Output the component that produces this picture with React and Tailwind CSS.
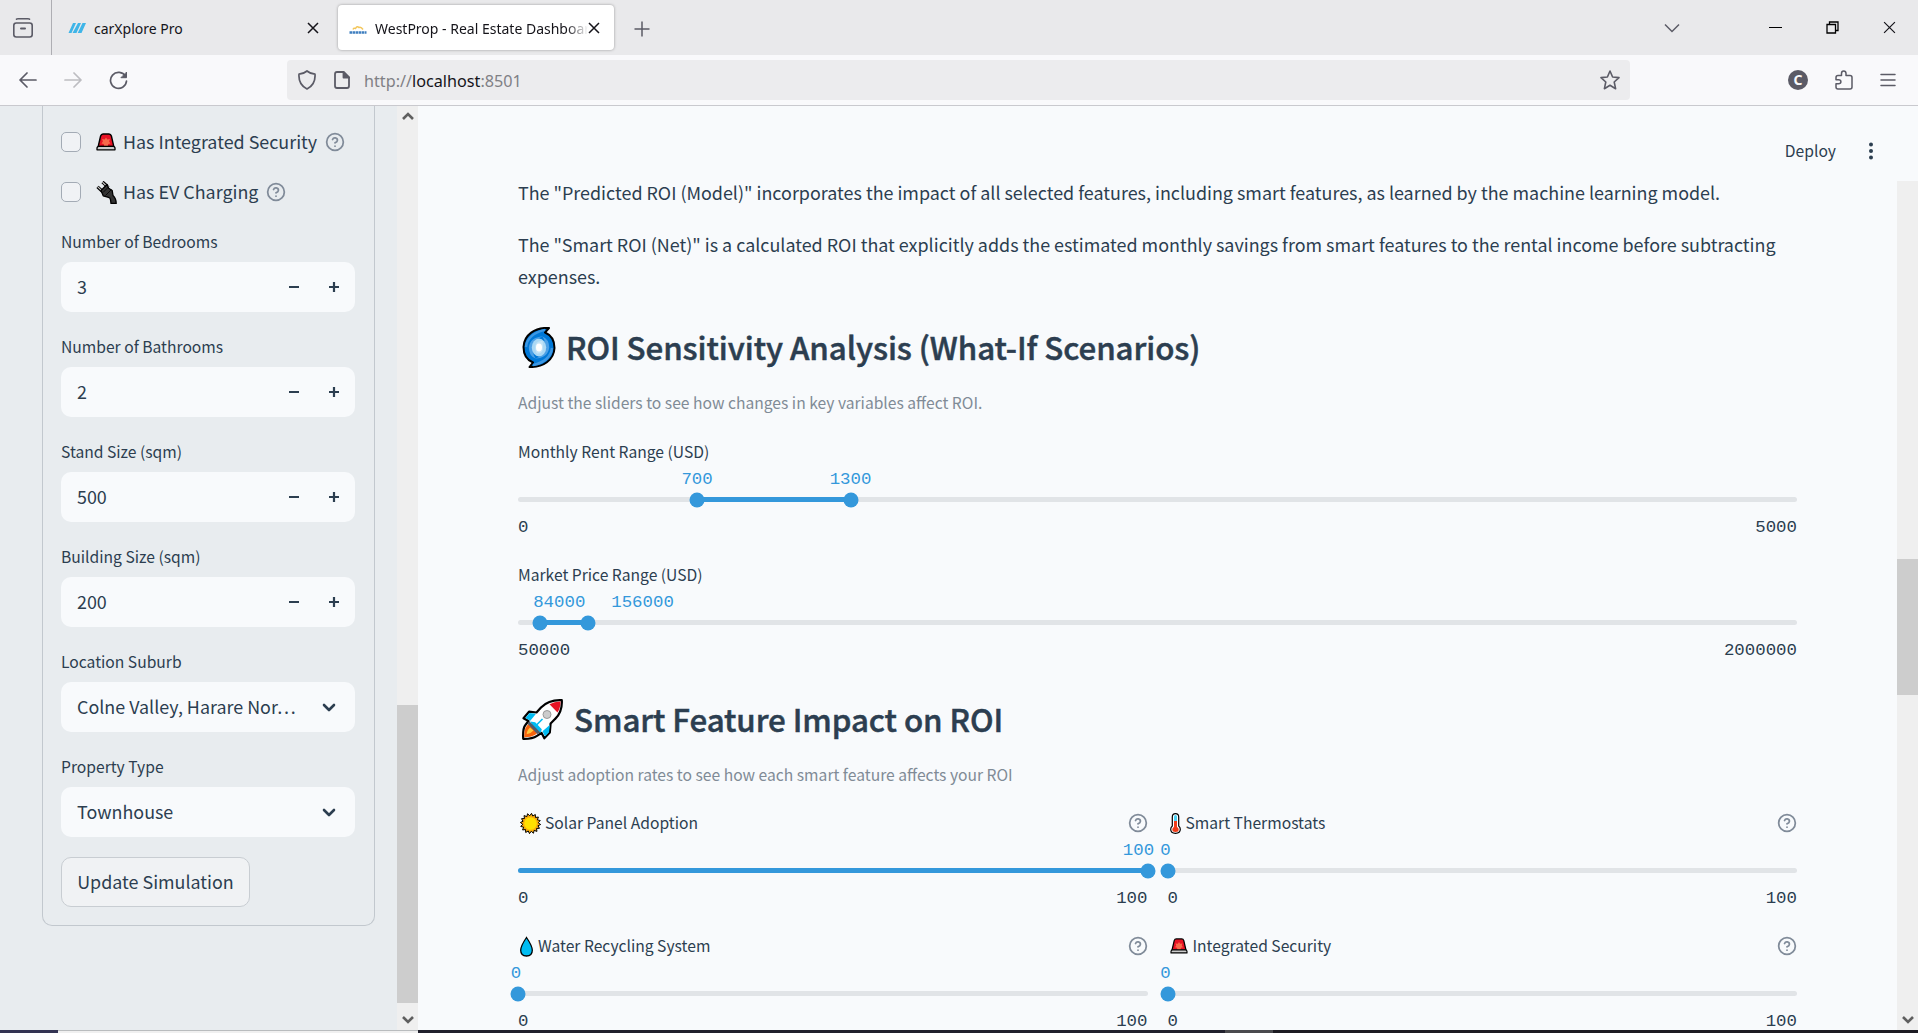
import React from 'react';

/* ---------- emoji artwork ---------- */

const Siren = ({ className }) => (
  <svg viewBox="0 0 20 18" className={className} fill="none">
    <path d="M2.2 13.5 4.6 3Q5.2 1 7 1h6q1.8 0 2.4 2l2.4 10.5Z" fill="#e81224" stroke="#000" strokeWidth="1.4" />
    <path d="m10 4.6 1.3 2 2.6-.5-.8 2.4 1.4 2-2.2.6-.6 2.2H8.300l-.6-2.200-2.200-.6 1.400-2-.8-2.400 2.600.5Z" fill="#f7694a" />
    <path d="M1 16.800v-1.600q0-1.900 2-1.900h14q2 0 2 1.900v1.600Z" fill="#ccc" stroke="#000" strokeWidth="1.300" strokeLinejoin="round" />
  </svg>
);

const Plug = ({ className }) => (
  <svg viewBox="0 0 21 23" className={className} fill="none">
    <path d="m6.500 1 5 4.500M1.500 5.800l5 4.700" stroke="#000" strokeWidth="3.200" />
    <path d="m6.500 1.200 4.500 4.300M1.800 5.800l4.700 4.500" stroke="#ccc" strokeWidth="1.100" />
    <path d="M11 3.500 5 9.500l2.200 5.300 4.600 1.400 2 .8q1.200 2 1.200 5.500h5.200q0-5-3.200-8l-.8-5-3.500-2.200Z" fill="#333" stroke="#000" strokeWidth="1.300" strokeLinejoin="round" />
    <path d="m7 11.500 6-6M9.500 14.500l6-6" stroke="#000" strokeWidth=".8" />
  </svg>
);

const Cyclone = ({ className }) => (
  <svg viewBox="0 0 34 41" className={className} fill="none">
    <path d="M27 1C13 0 2 8 1.500 20 1.500 27 5 33 11 35.500L7.500 40C21 40.500 32 33 32.500 21 32.500 14 29 8 23 5.500Z" fill="#0078d7" stroke="#000" strokeWidth="2" strokeLinejoin="round" />
    <path d="M23 2.900Q5.500 7 4 20M11 38.100Q28.500 34 30 21" stroke="#3d97e3" strokeWidth="2.400" />
    <path d="M21 9.500Q8 10 6.800 20.500 7 29 13.500 31.500 9.500 25 11 18q2-6.500 10-8.500ZM13 31.500Q26 31 27.200 20.500 27 12 20.500 9.500 24.500 16 23 23q-2 6.500-10 8.500Z" fill="#4ca0e6" />
    <ellipse cx="17" cy="20.500" rx="7.200" ry="9" fill="#abd8f4" />
    <path d="M20.500 14q-7-1-7.300 6.500.3 5.500 2.300 6.300 5.800-.5 5.600-6.300 0-3-.6-6.500Z" fill="#fff" opacity=".3" />
    <ellipse cx="17" cy="20.500" rx="3" ry="4" fill="#fff" />
  </svg>
);

const Rocket = ({ className }) => (
  <svg viewBox="0 0 41 41" className={className} fill="none">
    <path d="M39.800 1.200Q27 .5 19 8.500l-4.500 5-7.500-.8-5.500 6.500 5 2.800-3.300 4.200q-2.500 3-2 13.600 9 .2 13.800-3l4.500-3 2.800 5.500 5.500-5.700.8-9 4.400-4.500Q40.500 13 39.800 1.200Z" fill="#fff" stroke="#000" strokeWidth="2.200" strokeLinejoin="round" />
    <path d="m14 14.800-6.500-.8-4 4.900 4.800 2.800Zm14 11-1 7.500-4 4.100-2.500-5.100ZM8.200 22.500l5 .8 6.600 7-1 3.200-6-2.500Z" fill="#00bcf2" />
    <path d="M27.500 5.200q5-2.800 11-2.700 0 6.500-3 11Z" fill="#e81224" />
    <path d="M6.200 25 3.400 29q-1.300 3.500-1.200 9.300 7 0 11-2.500l2.500-2Z" fill="#f7630c" />
    <path d="M8 28.500q-3.500 3.500-3.300 6.800 4-.5 6.800-3.800Z" fill="#ffc83d" />
    <path d="m7.300 22.300 11.300 11.500-3.300 1.200L5.800 25Z" fill="#515c6b" />
    <path d="m14.500 26 6-6" stroke="#00bcf2" strokeWidth="1.600" />
    <circle cx="25" cy="15.500" r="4" fill="#ccc" stroke="#999" strokeWidth="1" />
  </svg>
);

const sunPoints = Array.from({ length: 32 }, (_, i) => {
  const r = i % 2 ? 7.8 : 10.2;
  const a = (i / 32) * Math.PI * 2 + 0.1;
  return `${(10.5 + r * Math.cos(a)).toFixed(2)},${(10.5 + r * Math.sin(a)).toFixed(2)}`;
}).join(' ');

const Sun = ({ className }) => (
  <svg viewBox="0 0 21 21" className={className}>
    <polygon points={sunPoints} fill="#f7a80c" stroke="#000" strokeWidth="1" />
    <circle cx="10.500" cy="10.500" r="6.300" fill="#ffe000" />
  </svg>
);

const Thermometer = ({ className }) => (
  <svg viewBox="0 0 11 21" className={className}>
    <path d="M2.300 4q0-3.300 3.200-3.300T8.700 4v9q1.600 1.300 1.600 3.300 0 4-4.800 4t-4.800-4q0-2 1.600-3.300Z" fill="#fff" stroke="#000" strokeWidth="1.200" />
    <path d="M4 3.500q0-1.500 1.500-1.500T7 3.500V8H4Z" fill="#4dd2f5" />
    <path d="M4 8h3v6q1.700.8 1.700 2.500 0 2.500-3.200 2.500t-3.200-2.500Q2.300 14.800 4 14Z" fill="#f03a17" />
  </svg>
);

const Drop = ({ className }) => (
  <svg viewBox="0 0 13 21" className={className}>
    <path d="M6.500 1.500Q.7 10 .7 14.300q0 5.700 5.800 5.700t5.800-5.700Q12.300 10 6.500 1.500Z" fill="#00bcf2" stroke="#000" strokeWidth="1.300" />
  </svg>
);

/* ---------- small icons ---------- */

const Help = ({ className = '' }) => (
  <svg viewBox="0 0 24 24" className={`size-5 shrink-0 ${className}`} fill="none" stroke="#808b99" strokeWidth="2.100" strokeLinecap="round" strokeLinejoin="round">
    <circle cx="12" cy="12" r="10" />
    <path d="M9.090 9a3 3 0 0 1 5.830 1c0 2-3 3-3 3M12 17h.01" />
  </svg>
);

const Cross = ({ className, w = 1.5 }) => (
  <svg viewBox="0 0 12 12" className={className} fill="none" stroke="#15141a" strokeWidth={w}>
    <path d="m1 1 10 10M11 1 1 11" />
  </svg>
);

const ScrollArrow = ({ up }) => (
  <svg viewBox="0 0 12 8" className="h-2 w-3" fill="none" stroke="#5f5f5f" strokeWidth="2.600">
    <path d={up ? 'm1 7 5-5 5 5' : 'm1 1 5 5 5-5'} />
  </svg>
);

/* ---------- browser chrome ---------- */

function TabBar() {
  return (
    <div className="flex h-[55px] shrink-0 bg-[#e9e9eb] text-sm text-[#15141a]">
      <div className="flex w-[52px] shrink-0 items-center border-r border-[#aeaeb3] pl-[13px]">
        <svg viewBox="0 0 20 20" className="size-5" fill="none" stroke="#5b5b66" strokeWidth="1.600" strokeLinecap="round">
          <path d="M3.500 1.200Q4 .8 5 .8h10q1 0 1.500.4" />
          <rect x=".8" y="5" width="18.400" height="14" rx="2.500" />
          <path d="M8 10.500h4" strokeWidth="2" />
        </svg>
      </div>
      <div className="flex w-[286px] items-center pr-[19px] pl-4">
        <svg viewBox="0 0 18 12" className="mt-px h-3 w-[18px]" fill="#3fb5e8">
          <path d="M5 1h3L3.500 11h-3ZM10 1h3L8.500 11h-4ZM14.500 1H18l-4.500 10H9.700Z" />
        </svg>
        <span className="ml-2 flex-1 pt-0.5">carXplore Pro</span>
        <Cross className="size-3" />
      </div>
      <div className="mt-[5px] flex h-[45px] w-[276px] items-center rounded bg-white pl-[11px] shadow-[0_0_3px_rgba(0,0,0,0.35)]">
        <svg viewBox="0 0 18 10" className="mt-1 h-[10px] w-[18px] shrink-0" fill="none">
          <path d="M4 4.500q1-2 2.500-1Q8 .6 10 2.500q2-1 4 2" stroke="#f3c65a" strokeWidth="1.500" />
          <path d="M.5 7.500h17" stroke="#3f7fc0" strokeWidth="2.400" strokeDasharray="2.500 .5" />
        </svg>
        <span className="ml-2 w-[213px] shrink-0 overflow-hidden pt-0.5 whitespace-nowrap [mask-image:linear-gradient(to_right,black_90%,transparent)]">
          WestProp - Real Estate Dashboard
        </span>
        <Cross className="size-3 shrink-0" />
      </div>
      <svg viewBox="0 0 16 16" className="mt-[21px] ml-5 size-4" stroke="#5b5b66" strokeWidth="1.500">
        <path d="M8 .5v15M.5 8h15" />
      </svg>
      <div className="flex flex-1 items-center justify-end pr-[22px]">
        <svg viewBox="0 0 16 10" className="mr-[89px] h-[10px] w-4" fill="none" stroke="#5b5b66" strokeWidth="1.500">
          <path d="m1 1.500 7 7 7-7" />
        </svg>
        <div className="mr-[44px] h-px w-[13px] bg-black" />
        <svg viewBox="0 0 13 13" className="mr-11 size-[13px]" fill="none" stroke="#000" strokeWidth="1.300">
          <path d="M1 3.500h8.500V12H1ZM3.500 3.500V1H12v8.500H9.500" />
        </svg>
        <Cross className="size-[13px]" w={1.1} />
      </div>
    </div>
  );
}

function NavBar() {
  return (
    <div className="flex h-[51px] shrink-0 items-center border-b border-[#c9c9ce] bg-[#f9f9fb]">
      <svg viewBox="0 0 18 16" className="ml-[19px] h-4 w-[18px]" fill="none" stroke="#5b5b66" strokeWidth="1.700" strokeLinecap="round" strokeLinejoin="round">
        <path d="M17 8H1.500M8 1 1 8l7 7" />
      </svg>
      <svg viewBox="0 0 18 16" className="ml-[27px] h-4 w-[18px]" fill="none" stroke="#bdbdc1" strokeWidth="1.700" strokeLinecap="round" strokeLinejoin="round">
        <path d="M1 8h15.500M10 1l7 7-7 7" />
      </svg>
      <svg viewBox="0 0 19 19" className="ml-[27px] size-[19px]" fill="none" stroke="#5b5b66" strokeWidth="1.700" strokeLinecap="round">
        <path d="M16.500 5.500A8 8 0 1 0 17.500 10" />
        <path d="M17.500 1.500v5.200h-5.200Z" fill="#5b5b66" strokeWidth="1" strokeLinejoin="round" />
      </svg>
      <div className="ml-[159px] flex h-10 w-[1343px] items-center rounded bg-[#ececee]">
        <svg viewBox="0 0 20 20" className="ml-[10px] size-5" fill="none" stroke="#5b5b66" strokeWidth="1.700" strokeLinejoin="round">
          <path d="M10 1Q13.500 4 18 4.200 18.800 14.500 10 19 1.200 14.500 2 4.200 6.500 4 10 1Z" />
        </svg>
        <svg viewBox="0 0 16 18" className="ml-[17px] h-[18px] w-4" fill="none" stroke="#5b5b66" strokeWidth="1.800" strokeLinejoin="round">
          <path d="M3 1h6.500L15 6.500V15q0 2-2 2H3q-2 0-2-2V3q0-2 2-2Z" />
          <path d="M9.500 1v5.500H15Z" fill="#5b5b66" />
        </svg>
        <span className="ml-[14px] flex-1 pt-[3px] text-[16.2px] text-[#808085]">
          http://<span className="text-[#15141a]">localhost</span>:8501
        </span>
        <svg viewBox="0 0 20 20" className="mr-[10px] size-5" fill="none" stroke="#5b5b66" strokeWidth="1.600" strokeLinejoin="round">
          <path d="m10 1 2.600 6 6.400.6-4.800 4.400L15.600 18.700 10 15.300l-5.600 3.400L5.800 12 1 7.600 7.400 7Z" />
        </svg>
      </div>
      <div className="ml-[158px] flex size-5 items-center justify-center rounded-full bg-[#5b5b66] text-sm leading-none font-bold text-[#f9f9fb]">C</div>
      <svg viewBox="0 0 18 20" className="ml-[27px] h-5 w-[18px]" fill="none" stroke="#5b5b66" strokeWidth="1.500" strokeLinejoin="round">
        <path d="M6.500 5.500V3.400q0-2.400 2.200-2.400T11 3.400v2.100h4q2 0 2 2V17q0 2-2 2H3q-2 0-2-2v-3.300h2.500q2.400 0 2.400-2t-2.400-2H1V7.500q0-2 2-2Z" />
      </svg>
      <svg viewBox="0 0 16 14" className="ml-[27px] h-[14px] w-4" stroke="#5b5b66" strokeWidth="1.500" strokeLinecap="round">
        <path d="M1 1.500h14M1 7h14M1 12.500h14" />
      </svg>
    </div>
  );
}

/* ---------- sidebar ---------- */

const labelText = 'text-[15.65px]';

function CheckRow({ icon, children }) {
  return (
    <div className="flex h-5 items-center">
      <div className="size-5 rounded-[5px] border border-[#a3abb5] bg-[#f0f2f5]" />
      <div className="ml-[15px] flex w-[27px]">{icon}</div>
      <span className="pb-0.5 text-[17.9px] leading-5 whitespace-nowrap">{children}</span>
      <Help className="ml-2" />
    </div>
  );
}

function Field({ label, children }) {
  return (
    <div>
      <div className={`mb-[5px] h-[30px] leading-[30px] ${labelText}`}>{label}</div>
      <div className="flex h-[50px] items-center rounded-[10px] bg-[#f8fafc] pl-4 text-[17.9px]">{children}</div>
    </div>
  );
}

function NumberField({ label, value }) {
  return (
    <Field label={label}>
      <span className="flex-1 pb-0.5">{value}</span>
      <svg viewBox="0 0 10 10" className="mr-[30px] size-[10px]" fill="#2c3e50">
        <path d="M0 4h10v2H0Z" />
      </svg>
      <svg viewBox="0 0 10 10" className="mr-4 size-[10px]" fill="#2c3e50">
        <path d="M0 3.900h3.900V0h2.200v3.900H10v2.200H6.100V10H3.900V6.100H0Z" />
      </svg>
    </Field>
  );
}

function SelectField({ label, value }) {
  return (
    <Field label={label}>
      <span className="flex-1 pb-0.5">{value}</span>
      <svg viewBox="0 0 14 9" className="mr-[19px] h-[9px] w-[14px]" fill="none" stroke="#2c3e50" strokeWidth="2.600" strokeLinecap="round" strokeLinejoin="round">
        <path d="m2 2 5 5 5-5" />
      </svg>
    </Field>
  );
}

function Sidebar() {
  return (
    <aside className="flex w-[418px] shrink-0 bg-[#e8ecef]">
      <div className="w-[397px] pl-[42px]">
        <div className="flex h-[820px] w-[333px] flex-col rounded-b-[10px] border border-t-0 border-[#c2c8ce] pt-[26px] pr-[19px] pl-[18px]">
          <div className="flex flex-col gap-[30px]">
            <CheckRow icon={<Siren className="h-[18px] w-5" />}>Has Integrated Security</CheckRow>
            <CheckRow icon={<Plug className="h-[23px] w-[21px]" />}>Has EV Charging</CheckRow>
          </div>
          <div className="mt-[25px] flex flex-col gap-5">
            <NumberField label="Number of Bedrooms" value="3" />
            <NumberField label="Number of Bathrooms" value="2" />
            <NumberField label="Stand Size (sqm)" value="500" />
            <NumberField label="Building Size (sqm)" value="200" />
            <SelectField label="Location Suburb" value="Colne Valley, Harare Nor…" />
            <SelectField label="Property Type" value="Townhouse" />
            <button className="h-[50px] w-[189px] rounded-[10px] border border-[#c8cdd2] bg-[#f0f2f4] pb-0.5 text-[17.9px] whitespace-nowrap">
              Update Simulation
            </button>
          </div>
        </div>
      </div>
      <div className="flex w-[21px] flex-col items-center bg-[#efefef]">
        <div className="flex h-[19px] items-center"><ScrollArrow up /></div>
        <div className="mt-auto h-[298px] w-full bg-[#cdcdcd]" />
        <div className="flex h-[27px] items-center pt-[6px]"><ScrollArrow /></div>
      </div>
    </aside>
  );
}

/* ---------- main area ---------- */

const mono = "font-['Liberation_Mono',monospace] text-[17.4px]";

function Slider({ icon, label, min, max, stops, help }) {
  const from = stops.length > 1 ? stops[0].at : 0;
  const to = stops[stops.length - 1].at;
  return (
    <div className="relative flex h-[103px] min-w-0 flex-1 flex-col">
      <div className="flex h-7 items-center">
        {icon}
        <span className={`flex-1 whitespace-nowrap ${labelText}`}>{label}</span>
        {help && <Help />}
      </div>
      <div className="relative mt-[31px] h-[5px] rounded-full bg-[#e1e4e7]">
        <div className="absolute h-full rounded-full bg-[#3498db]" style={{ left: `${from}%`, width: `${to - from}%` }} />
        {stops.map((s) => (
          <React.Fragment key={s.text}>
            <div className="absolute top-1/2 size-[15px] -translate-1/2 rounded-full bg-[#3498db]" style={{ left: `${s.at}%` }} />
            <div
              className={`absolute -top-7 -translate-x-1/2 leading-[21px] text-[#3498db] ${mono}`}
              style={{ left: `calc(${s.at}% + ${s.shift || 0}px)` }}
            >
              {s.text}
            </div>
          </React.Fragment>
        ))}
      </div>
      <div className={`mt-4 flex justify-between leading-5 ${mono}`}>
        <span>{min}</span>
        <span>{max}</span>
      </div>
    </div>
  );
}

function Heading({ icon, children }) {
  return (
    <h2 className="mt-[30px] flex h-[50px] shrink-0 items-center text-[31.3px] font-medium tracking-[-0.07px] whitespace-nowrap [-webkit-text-stroke:0.5px_#2c3e50]">
      {icon}
      <span>{children}</span>
    </h2>
  );
}

const Caption = ({ children }) => (
  <p className={`mt-[17px] mb-[21px] h-7 shrink-0 leading-7 text-[#808b96] ${labelText}`}>{children}</p>
);

function Main() {
  return (
    <main className="flex min-w-0 flex-1 bg-[#f8fafc]">
      <div className="flex min-w-0 flex-1 flex-col">
        <header className="flex h-[70px] shrink-0 items-center justify-end pr-6">
          <span className={`pt-5 ${labelText}`}>Deploy</span>
          <svg viewBox="0 0 4 18" className="mt-[20px] ml-[33px] h-[18px] w-1" fill="#2c3e50">
            <circle cx="2" cy="2.500" r="2" />
            <circle cx="2" cy="9" r="2" />
            <circle cx="2" cy="15.500" r="2" />
          </svg>
        </header>
        <div className="flex min-h-0 flex-col overflow-hidden pr-[100px] pl-[100px]">
          <div className="flex shrink-0 flex-col gap-5 text-[17.91px] leading-8">
            <p>The "Predicted ROI (Model)" incorporates the impact of all selected features, including smart features, as learned by the machine learning model.</p>
            <p>The "Smart ROI (Net)" is a calculated ROI that explicitly adds the estimated monthly savings from smart features to the rental income before subtracting expenses.</p>
          </div>
          <Heading icon={<Cyclone className="mr-[10px] ml-1 h-[41px] w-[34px]" />}>ROI Sensitivity Analysis (What-If Scenarios)</Heading>
          <Caption>Adjust the sliders to see how changes in key variables affect ROI.</Caption>
          <div className="flex shrink-0 flex-col gap-5">
            <div className="flex">
              <Slider label="Monthly Rent Range (USD)" min="0" max="5000" stops={[{ at: 14, text: '700' }, { at: 26, text: '1300' }]} />
            </div>
            <div className="flex">
              <Slider label="Market Price Range (USD)" min="50000" max="2000000" stops={[{ at: 1.74, text: '84000', shift: 19 }, { at: 5.44, text: '156000', shift: 55 }]} />
            </div>
          </div>
          <Heading icon={<Rocket className="mr-[11px] ml-1 size-[41px]" />}>Smart Feature Impact on ROI</Heading>
          <Caption>Adjust adoption rates to see how each smart feature affects your ROI</Caption>
          <div className="-mt-px flex shrink-0 flex-col gap-5">
            <div className="flex gap-5">
              <Slider icon={<Sun className="mr-1 ml-0.5 size-[21px]" />} label="Solar Panel Adoption" min="0" max="100" help stops={[{ at: 100, text: '100', shift: -9 }]} />
              <Slider icon={<Thermometer className="mr-[5px] ml-0.5 h-[21px] w-[11px]" />} label="Smart Thermostats" min="0" max="100" help stops={[{ at: 0, text: '0', shift: -2 }]} />
            </div>
            <div className="flex gap-5">
              <Slider icon={<Drop className="mr-[5px] ml-0.5 h-[21px] w-[13px]" />} label="Water Recycling System" min="0" max="100" help stops={[{ at: 0, text: '0', shift: -2 }]} />
              <Slider icon={<Siren className="mr-[5px] ml-0.5 h-4 w-[18px]" />} label="Integrated Security" min="0" max="100" help stops={[{ at: 0, text: '0', shift: -2 }]} />
            </div>
          </div>
        </div>
      </div>
      <div className="mt-[75px] flex w-[21px] shrink-0 flex-col items-center bg-[#efefef]">
        <div className="mt-[378px] h-[136px] w-full bg-[#cdcdcd]" />
        <div className="mt-auto flex h-5 items-center"><ScrollArrow /></div>
      </div>
    </main>
  );
}

export default function App() {
  return (
    <div className="flex h-[1033px] w-[1918px] flex-col overflow-hidden font-['Noto_Sans',sans-serif]">
      <TabBar />
      <NavBar />
      <div className="flex h-[924px] shrink-0 overflow-hidden font-['Noto_Sans_CJK_SC',sans-serif] text-[#2c3e50]">
        <Sidebar />
        <Main />
      </div>
      <div className="flex h-[3px] shrink-0 bg-[#1c1b22]">
        <div className="w-[58px] bg-[#333352]" />
        <div className="w-[360px] border-t border-[#b9bcbe] bg-[#f0f0f0]" />
        <div className="w-[807px] bg-[#20202c]" />
        <div className="w-12 bg-[#4a4a4e]" />
      </div>
    </div>
  );
}
